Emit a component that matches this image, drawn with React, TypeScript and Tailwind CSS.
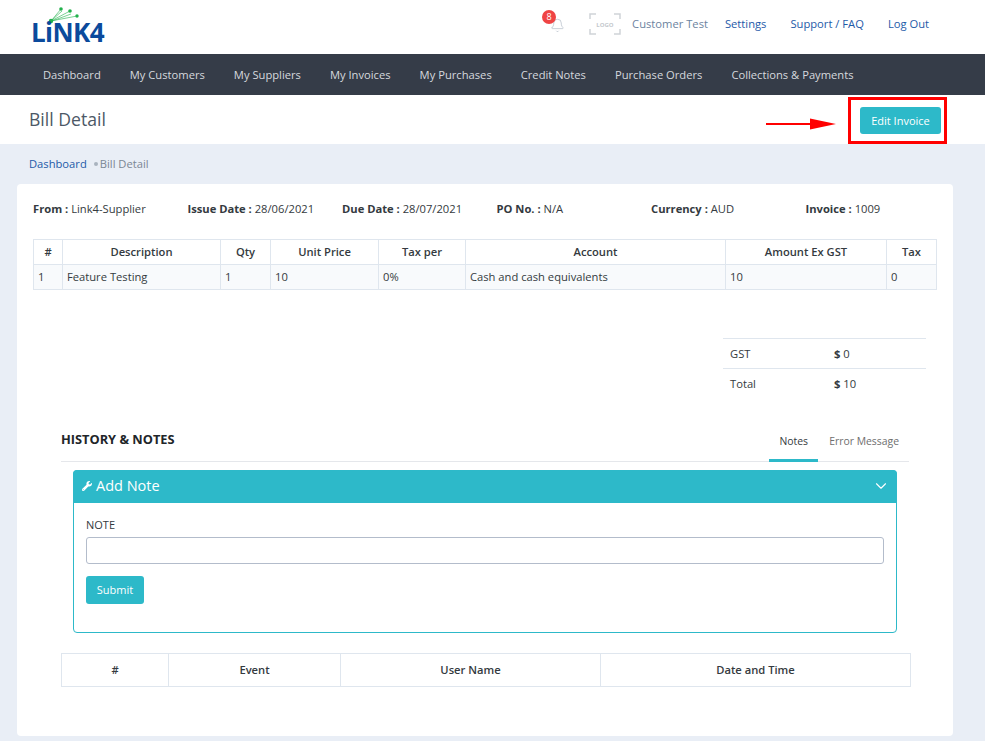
import { Bell, ChevronDown } from "lucide-react";
import { FaWrench } from "react-icons/fa";

const navItems = [
  "Dashboard",
  "My Customers",
  "My Suppliers",
  "My Invoices",
  "My Purchases",
  "Credit Notes",
  "Purchase Orders",
  "Collections & Payments",
];

const metaItems = [
  { label: "From :", value: "Link4-Supplier", width: "w-[154.5px]" },
  { label: "Issue Date :", value: "28/06/2021", width: "w-[154.5px]" },
  { label: "Due Date :", value: "28/07/2021", width: "w-[154.5px]" },
  { label: "PO No. :", value: "N/A", width: "w-[154.5px]" },
  { label: "Currency :", value: "AUD", width: "w-[154.5px]" },
  { label: "Invoice :", value: "1009", width: "" },
];

function Logo() {
  return (
    <div className="relative w-[76px] h-[44px]">
      <svg width="76" height="24" viewBox="0 0 76 24" className="absolute left-0 top-0">
        <g stroke="#22b14c" strokeWidth="0.6" fill="none">
          <path d="M18 21 L28 9" />
          <path d="M18 21 L37 11" />
          <path d="M18 21 L44 16" />
          <path d="M19 20 L29 11" />
          <path d="M19 21 L38 14" />
        </g>
        <circle cx="28" cy="9" r="1.8" fill="#22b14c" />
        <circle cx="37" cy="11" r="1.8" fill="#22b14c" />
        <circle cx="44" cy="16" r="1.7" fill="#22b14c" />
        <circle cx="18" cy="21" r="2.2" fill="#22b14c" />
      </svg>
      <span className="absolute left-[-2px] top-[19px] text-[#0b4a9c] text-[26px] leading-[26px] font-bold tracking-[-0.6px] font-['Open_Sans',sans-serif]">
        LiNK4
      </span>
    </div>
  );
}

function LogoPlaceholder() {
  return (
    <svg width="32" height="22" viewBox="0 0 32 22">
      <g stroke="#cfd3d8" strokeWidth="1.5" fill="none">
        <path d="M1 6 V1 H7" />
        <path d="M25 1 H31 V6" />
        <path d="M1 16 V21 H7" />
        <path d="M25 21 H31 V16" />
      </g>
      <text x="16" y="13.5" textAnchor="middle" fontSize="6" fontWeight="700" fill="#c4c8cd" fontFamily="'Open Sans', sans-serif">
        LOGO
      </text>
    </svg>
  );
}

export default function App() {
  return (
    <div className="w-[985px] h-[741px] overflow-hidden bg-[#e9eef6] font-['Open_Sans',sans-serif] text-[11.2px] text-[#343a40]">
      {/* top header */}
      <header className="h-[54px] bg-white flex items-start pl-[33px] pr-[56px]">
        <Logo />
        <div className="ml-auto flex items-center h-[48px]">
          <div className="relative mr-[24px] mt-[2px]">
            <Bell size={15} strokeWidth={1} className="text-[#aab4c0]" />
            <span className="absolute left-[-8px] top-[-8px] w-[14px] h-[14px] rounded-full bg-[#ef4444] text-white text-[9px] leading-[14px] text-center">
              8
            </span>
          </div>
          <LogoPlaceholder />
          <span className="ml-[11px] text-[#6c83a0]">Customer Test</span>
          <a className="ml-[17px] text-[#1e5aa8]">Settings</a>
          <a className="ml-[24px] text-[#1e5aa8]">Support / FAQ</a>
          <a className="ml-[24px] text-[#1e5aa8]">Log Out</a>
        </div>
      </header>

      {/* main nav */}
      <nav className="h-[41px] pt-[1px] bg-[#353c48] flex items-center pl-[43px] gap-[29px] text-[#d5d9de]">
        {navItems.map((item) => (
          <a key={item}>{item}</a>
        ))}
      </nav>

      {/* page title */}
      <div className="h-[49px] bg-white flex items-center pl-[29px] pr-[38px]">
        <h1 className="text-[17.6px] text-[#4c5866] font-normal">Bill Detail</h1>
        <svg width="72" height="14" viewBox="0 0 72 14" className="ml-auto mr-[10px] mt-[9px]">
          <rect x="0" y="6" width="46" height="2" fill="#ff0000" />
          <polygon points="44,1.5 70,7 44,12.5" fill="#ff0000" />
        </svg>
        <div className="mt-[2px] w-[99px] h-[47px] border-[3px] border-[#ff0000] flex items-center justify-end pr-[3px]">
          <button className="w-[81px] h-[27px] pt-[1px] rounded-[3px] bg-[#2db9c9] text-white text-[11px]">
            Edit Invoice
          </button>
        </div>
      </div>

      {/* breadcrumb */}
      <div className="h-[40px] pl-[29px] flex items-center">
        <a className="text-[#1e5aa8]">Dashboard</a>
        <span className="ml-[7px] mr-[2px] w-[4px] h-[4px] rounded-full bg-[#a9b3bf]" />
        <span className="text-[#7b8794]">Bill Detail</span>
      </div>

      {/* card */}
      <main className="mx-[17px] w-[936px] h-[552px] bg-white rounded-[4px] pt-[17px] px-[16px]">
        <div className="flex h-[16px] items-center">
          {metaItems.map((m) => (
            <div key={m.label} className={m.width}>
              <b className="font-bold">{m.label}</b> {m.value}
            </div>
          ))}
        </div>

        <table className="mt-[22px] w-[903px] table-fixed border-collapse">
          <colgroup>
            <col className="w-[29px]" />
            <col className="w-[158px]" />
            <col className="w-[50px]" />
            <col className="w-[108px]" />
            <col className="w-[87px]" />
            <col className="w-[260px]" />
            <col className="w-[161px]" />
            <col className="w-[50px]" />
          </colgroup>
          <thead>
            <tr className="h-[25px]">
              {["#", "Description", "Qty", "Unit Price", "Tax per", "Account", "Amount Ex GST", "Tax"].map((h) => (
                <th key={h} className="border border-[#dfe6ee] font-semibold text-center px-[4px]">
                  {h}
                </th>
              ))}
            </tr>
          </thead>
          <tbody>
            <tr className="h-[25px] bg-[#f8fafc]">
              {["1", "Feature Testing", "1", "10", "0%", "Cash and cash equivalents", "10", "0"].map((c, i) => (
                <td key={i} className="border border-[#dfe6ee] px-[4px]">
                  {c}
                </td>
              ))}
            </tr>
          </tbody>
        </table>

        {/* totals */}
        <div className="mt-[48px] ml-[690px] w-[203px]">
          <div className="h-[30px] pt-[1px] border-t border-[#dfe6ee] flex items-center pl-[7px]">
            <span className="w-[104px]">GST</span>
            <span><b>$</b> 0</span>
          </div>
          <div className="h-[30px] pt-[1px] border-t border-[#dfe6ee] flex items-center pl-[7px]">
            <span className="w-[104px]">Total</span>
            <span><b>$</b> 10</span>
          </div>
        </div>

        {/* history & notes */}
        <div className="mt-[25px] mx-[28px] w-[850px]">
          <div className="h-[39px] w-[848px] border-b border-[#e5e7eb] flex items-start justify-between">
            <h2 className="text-[12.8px] font-bold text-[#212529] leading-[16px] mt-[8px]">HISTORY &amp; NOTES</h2>
            <div className="flex h-[39px] mr-[10px] text-[10.4px]">
              <div className="w-[49px] border-b-[3px] border-[#2db9c9] text-center pt-[11px] text-[#343a40]">Notes</div>
              <div className="ml-[11px] pt-[11px] text-[#6e6e6e]">Error Message</div>
            </div>
          </div>

          <section className="mt-[8px] mx-[12px] w-[824px] h-[163px] border border-[#2db9c9] rounded-[4px]">
            <div className="h-[33px] pb-[1px] -mt-px -mx-px bg-[#2db9c9] rounded-t-[4px] flex items-center pl-[9px] pr-[7px] text-white">
              <FaWrench size={10} />
              <span className="ml-[4px] text-[14.5px]">Add Note</span>
              <ChevronDown size={18} strokeWidth={1.5} className="ml-auto" />
            </div>
            <div className="px-[12px] pt-[15px]">
              <label className="block text-[11px] leading-[14px] text-[#343a40]">NOTE</label>
              <input className="block mt-[5px] w-[798px] h-[27px] border border-[#b3bccb] rounded-[3px] bg-white" />
              <button className="block mt-[12px] w-[58px] h-[28px] rounded-[3px] bg-[#2db9c9] text-white text-[11px] font-medium">
                Submit
              </button>
            </div>
          </section>

          <table className="mt-[20px] w-[849px] table-fixed border-collapse">
            <colgroup>
              <col className="w-[107px]" />
              <col className="w-[172px]" />
              <col className="w-[260px]" />
              <col className="w-[310px]" />
            </colgroup>
            <thead>
              <tr className="h-[33px]">
                {["#", "Event", "User Name", "Date and Time"].map((h) => (
                  <th key={h} className="border border-[#dfe6ee] font-semibold text-center">
                    {h}
                  </th>
                ))}
              </tr>
            </thead>
          </table>
        </div>
      </main>
    </div>
  );
}
